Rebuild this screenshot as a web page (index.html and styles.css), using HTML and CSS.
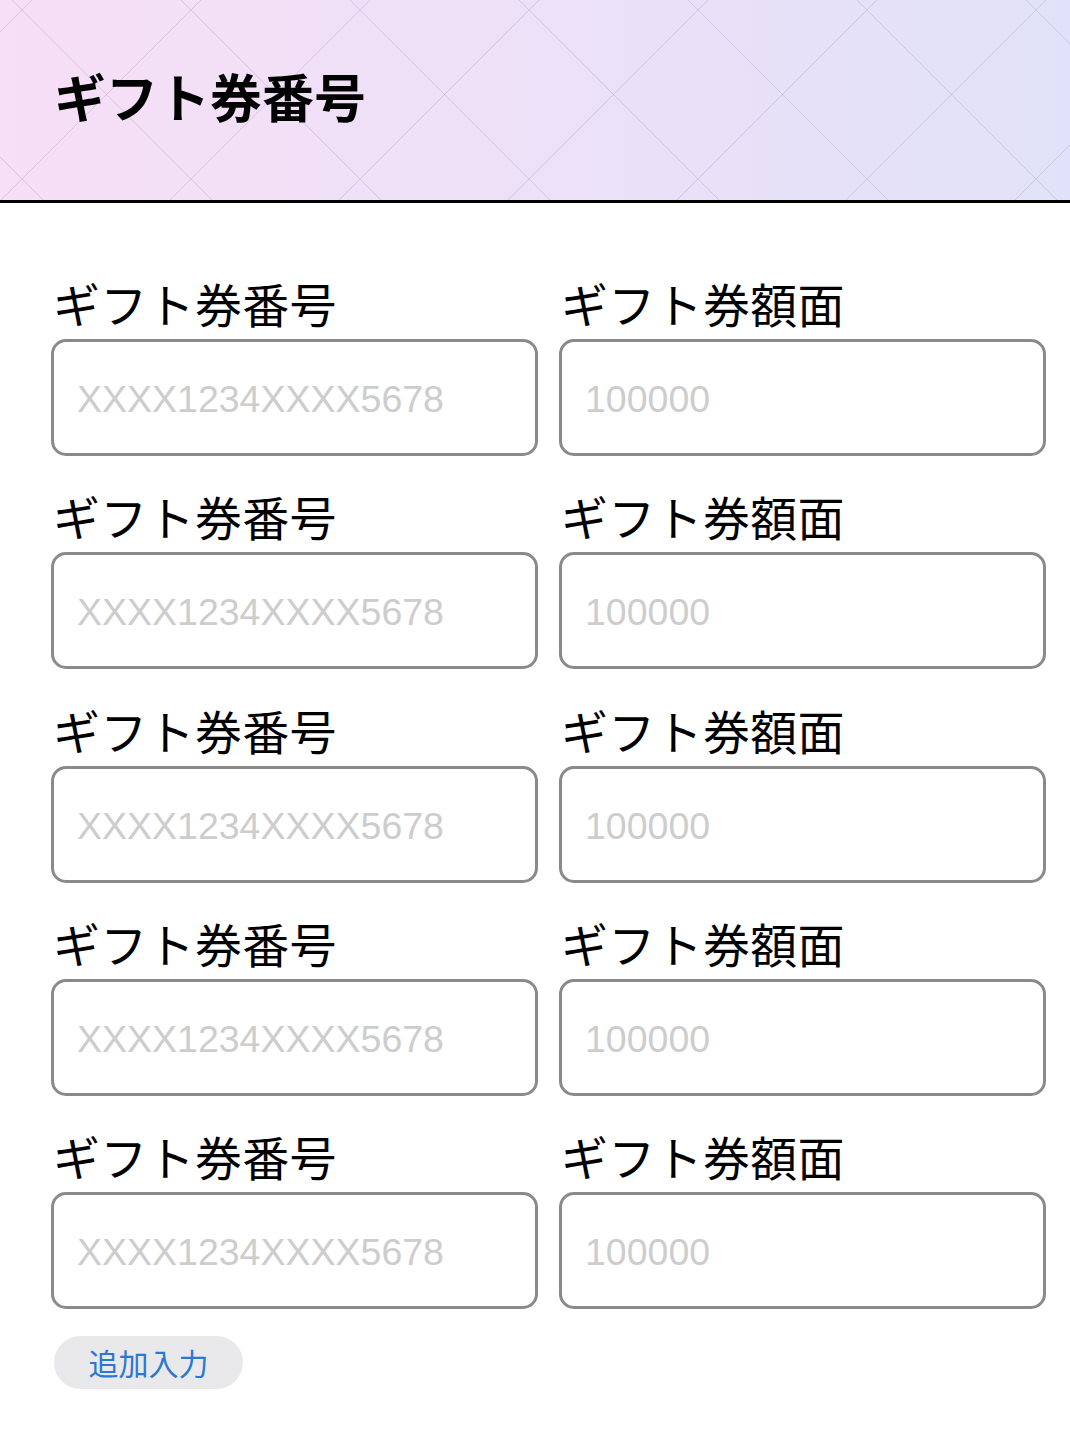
FILE: index.html
```html
<!DOCTYPE html>
<html lang="ja">
<head>
<meta charset="utf-8">
<title>ギフト券番号</title>
<link rel="stylesheet" href="styles.css">
</head>
<body>
<header class="page-header">
  <h1 class="page-title">ギフト券番号</h1>
</header>
<main class="content">
  <div class="grid">
    <div class="field"><label class="label">ギフト券番号</label><input class="input" type="text" placeholder="XXXX1234XXXX5678"></div>
    <div class="field"><label class="label">ギフト券額面</label><input class="input" type="text" placeholder="100000"></div>
    <div class="field"><label class="label">ギフト券番号</label><input class="input" type="text" placeholder="XXXX1234XXXX5678"></div>
    <div class="field"><label class="label">ギフト券額面</label><input class="input" type="text" placeholder="100000"></div>
    <div class="field"><label class="label">ギフト券番号</label><input class="input" type="text" placeholder="XXXX1234XXXX5678"></div>
    <div class="field"><label class="label">ギフト券額面</label><input class="input" type="text" placeholder="100000"></div>
    <div class="field"><label class="label">ギフト券番号</label><input class="input" type="text" placeholder="XXXX1234XXXX5678"></div>
    <div class="field"><label class="label">ギフト券額面</label><input class="input" type="text" placeholder="100000"></div>
    <div class="field"><label class="label">ギフト券番号</label><input class="input" type="text" placeholder="XXXX1234XXXX5678"></div>
    <div class="field"><label class="label">ギフト券額面</label><input class="input" type="text" placeholder="100000"></div>
  </div>
  <button class="add-btn" type="button">追加入力</button>
</main>
</body>
</html>
```
FILE: styles.css
```css
html, body {
  margin: 0;
  padding: 0;
  background: #ffffff;
}
body {
  font-family: "Noto Sans CJK JP", "Noto Sans", sans-serif;
  color: #000;
}
.page-header {
  height: 203px;
  box-sizing: border-box;
  padding: 65px 0 0 54px;
  border-bottom: 3px solid #000;
  background-color: #ece0f8;
  background-image:
    linear-gradient(45deg, transparent calc(50% - 0.8px), rgba(125, 110, 160, 0.2) 50%, transparent calc(50% + 0.8px)),
    linear-gradient(135deg, transparent calc(50% - 0.8px), rgba(125, 110, 160, 0.2) 50%, transparent calc(50% + 0.8px)),
    linear-gradient(90deg, #f7dff6 0%, #e1e2f9 100%);
  background-size: 169px 169px, 169px 169px, 100% 100%;
  background-position: 22px 10px, 22px 10px, 0 0;
  background-repeat: repeat, repeat, no-repeat;
}
.page-title {
  margin: 0;
  font-size: 52px;
  line-height: 62px;
  font-weight: 700;
  letter-spacing: 0;
}
.content {
  padding: 72px 24px 40px 51px;
}
.grid {
  display: grid;
  grid-template-columns: 487px 487px;
  column-gap: 21px;
  row-gap: 32.3px;
}
.field {
  display: flex;
  flex-direction: column;
  gap: 8px;
}
.label {
  display: block;
  font-size: 47px;
  line-height: 56px;
  font-weight: 400;
  padding-left: 2px;
  letter-spacing: 0.3px;
}
.input {
  box-sizing: border-box;
  width: 100%;
  height: 117px;
  margin: 0;
  border: 3px solid #8a8a8a;
  border-radius: 15px;
  padding: 4px 23px 0;
  background: #fff;
  font-family: "Liberation Sans", Arial, sans-serif;
  font-size: 37.5px;
  color: #000;
  outline: none;
}
.input::placeholder {
  color: #cdcdcd;
  opacity: 1;
}
.add-btn {
  margin: 27px 0 0 3px;
  height: 53px;
  width: 189px;
  border: none;
  border-radius: 27px;
  background: #e9e9eb;
  color: #2b78d2;
  font-family: "Noto Sans CJK JP", sans-serif;
  font-size: 30px;
  line-height: 53px;
  padding: 0;
  text-align: center;
  cursor: pointer;
}
```
